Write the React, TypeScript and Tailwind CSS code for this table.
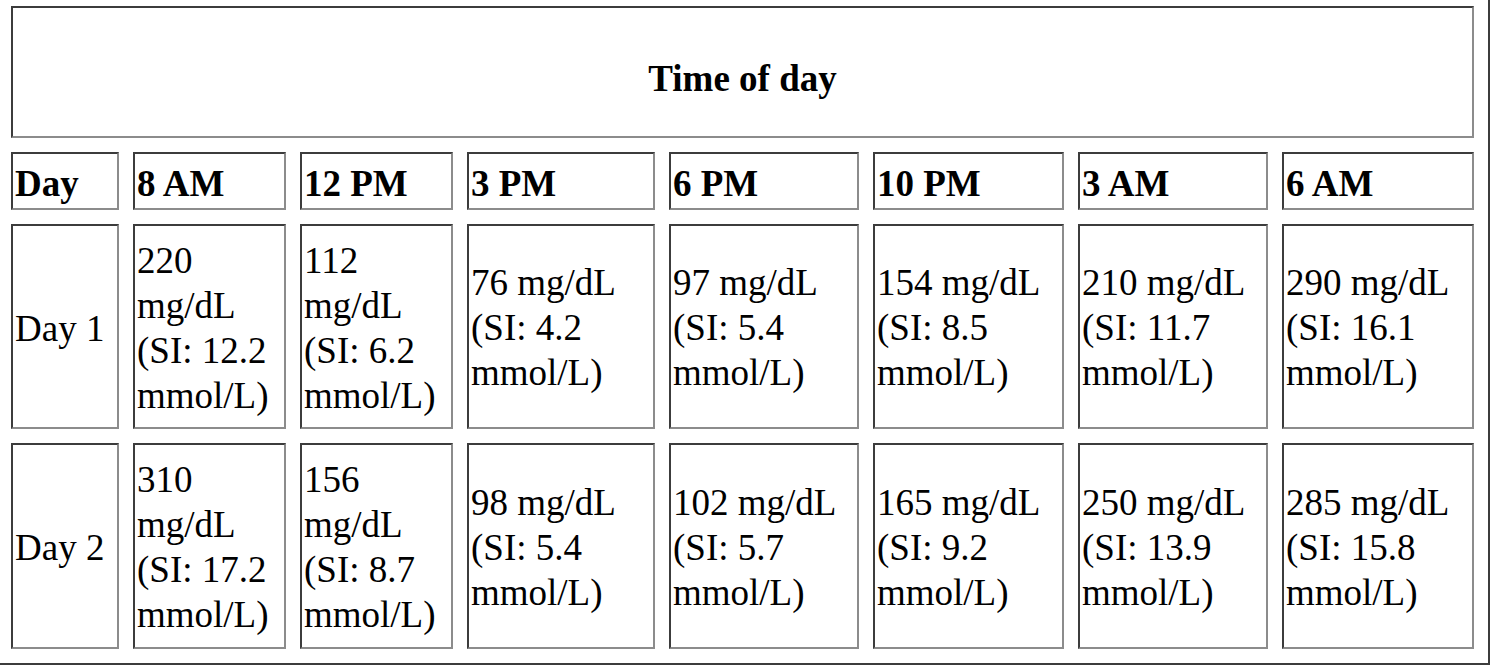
const columns = [
  { label: "Day", width: "w-[108px]" },
  { label: "8 AM", width: "w-[153px]" },
  { label: "12 PM", width: "w-[153px]" },
  { label: "3 PM", width: "w-[188px]" },
  { label: "6 PM", width: "w-[190px]" },
  { label: "10 PM", width: "w-[191px]" },
  { label: "3 AM", width: "w-[190px]" },
  { label: "6 AM", width: "w-[192px]" },
]

const rows = [
  {
    day: "Day 1",
    height: "h-[205px]",
    readings: [
      ["220", "12.2"],
      ["112", "6.2"],
      ["76", "4.2"],
      ["97", "5.4"],
      ["154", "8.5"],
      ["210", "11.7"],
      ["290", "16.1"],
    ],
  },
  {
    day: "Day 2",
    height: "h-[206px]",
    readings: [
      ["310", "17.2"],
      ["156", "8.7"],
      ["98", "5.4"],
      ["102", "5.7"],
      ["165", "9.2"],
      ["250", "13.9"],
      ["285", "15.8"],
    ],
  },
]

// inset-style cell border like a plain border="1" table
const cell =
  "border-2 border-t-[#3c3c3c] border-l-[#3c3c3c] border-r-[#8c8c8c] border-b-[#8c8c8c] px-[2px] align-middle"

export default function App() {
  return (
    <div className="min-h-screen overflow-hidden bg-white text-black font-['Liberation_Serif',serif]">
      <div className="-ml-[5px] -mt-[10px]">
        <table className="border-separate border-spacing-[14px] border-2 border-t-[#8c8c8c] border-l-[#8c8c8c] border-r-[#3c3c3c] border-b-[#3c3c3c] text-[37px] leading-[45px]">
          <thead>
            <tr>
              <th colSpan={8} className={`${cell} h-[132px] pt-[12px] text-center font-bold`}>
                Time of day
              </th>
            </tr>
            <tr>
              {columns.map((col) => (
                <th key={col.label} className={`${cell} ${col.width} h-[58px] pt-[5px] pb-0 text-left font-bold`}>
                  {col.label}
                </th>
              ))}
            </tr>
          </thead>
          <tbody>
            {rows.map((row) => (
              <tr key={row.day}>
                <td className={`${cell} ${row.height} pt-[3px] text-left`}>{row.day}</td>
                {row.readings.map(([mg, si], i) => (
                  <td key={i} className={`${cell} pt-[2px] text-left`}>
                    {mg} mg/dL (SI: {si} mmol/L)
                  </td>
                ))}
              </tr>
            ))}
          </tbody>
        </table>
      </div>
    </div>
  )
}
